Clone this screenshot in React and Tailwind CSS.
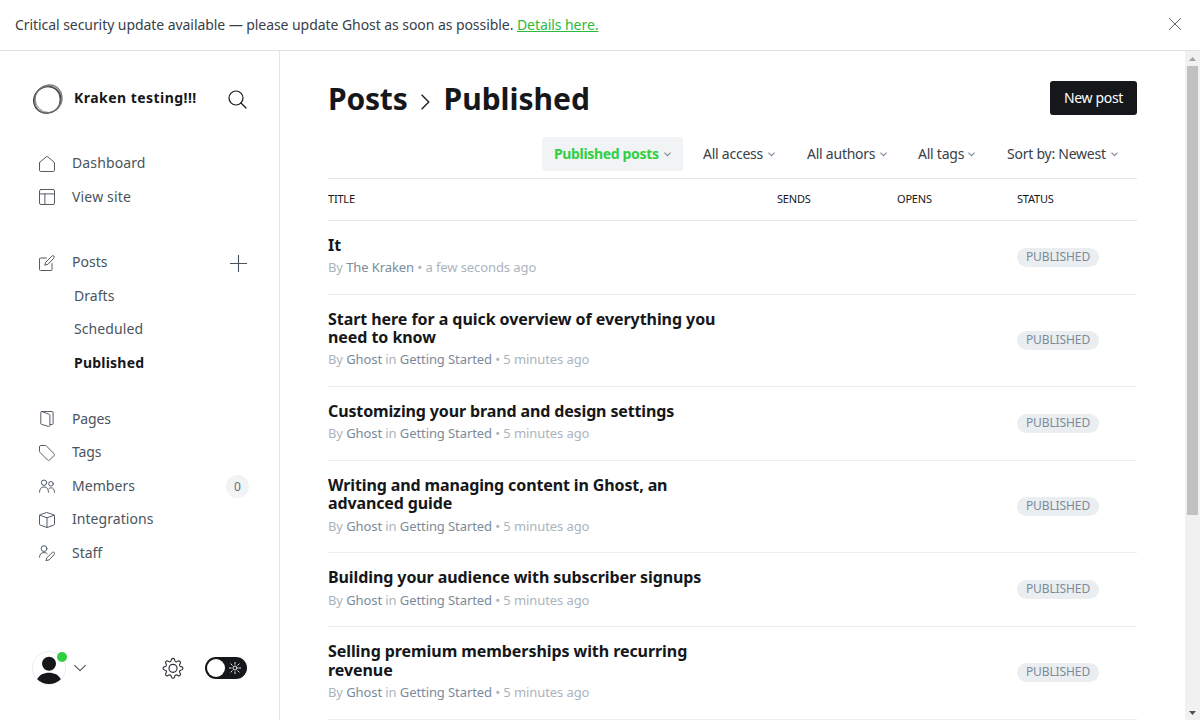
import React from "react";

const Icon = ({ children, className = "", size = 16, view = "0 0 16 16", w = 0.95 }) => (
  <svg width={size} height={size} viewBox={view} fill="none" stroke="currentColor" strokeWidth={w} strokeLinecap="round" strokeLinejoin="round" className={"shrink-0 " + className}>
    {children}
  </svg>
);

const icons = {
  home: <path d="M.5 7v7.2c0 .7.5 1.300 1.200 1.300h12.600c.7 0 1.200-.6 1.200-1.300V7c0-.4-.2-.7-.5-1L8.700.8a1.100 1.100 0 0 0-1.400 0L1 6c-.3.300-.5.600-.5 1z" />,
  site: <g><rect x=".5" y=".5" width="15" height="15" rx="1.500" /><path d="M.5 4.900h15M5.900 4.900v10.600" /></g>,
  posts: <g><path d="M7.500 3H1.500a1 1 0 0 0-1 1v10.500a1 1 0 0 0 1 1H12a1 1 0 0 0 1-1V8.500" /><path d="M8.600 9.400l-2.800.800.800-2.800L12.900 1.100a1.400 1.400 0 0 1 2 2z" /></g>,
  pages: <g><path d="M11.500 13.500h1.600c.6 0 1-.4 1-1V1.500c0-.6-.4-1-1-1H2.600" /><path d="M2.600.5c-.5 0-.8.400-.8.900v11.100c0 .4.300.8.700.9l7.200 2c.6.200 1.200-.3 1.200-.9V4.300c0-.5-.3-.9-.7-1z" /></g>,
  tags: <path d="M.5 2v4.300c0 .4.200.8.500 1.100l7.700 7.700c.5.500 1.300.5 1.800 0l4.600-4.600c.5-.5.5-1.300 0-1.800L7.400 1C7.100.7 6.700.5 6.300.5H2C1.200.5.5 1.200.5 2z" />,
  members: <g><circle cx="5" cy="4.700" r="2.700" /><circle cx="12" cy="5.800" r="2.300" /><path d="M.5 14.200c0-3.200 1.600-5.300 4.500-5.300s4.500 2.100 4.500 5.300M9.800 10.800c.6-.7 1.300-1 2.200-1 2.300 0 3.500 1.700 3.500 4.400" /></g>,
  box: <path d="M8 .6l6.700 2.100c.5.200.8.500.8 1v8.400c0 .5-.3.900-.8 1L8 15.500l-6.700-2.400c-.5-.1-.8-.5-.8-1V3.700c0-.5.300-.8.800-1zM.8 3.200L8 5.800l7.200-2.600M8 5.800v9.500" />,
  staff: <g><circle cx="5" cy="3.600" r="2.900" /><path d="M.5 12.200C.6 9.300 2.200 7.600 5 7.600c1.300 0 2.400.4 3.200 1.100M9.900 14.900l-2.900.8.800-2.900 5.500-5.300a1.350 1.350 0 0 1 2 2z" /></g>,
};

const NavItem = ({ icon, label, track, children }) => (
  <div className="flex h-[33.5px] items-center pl-[39px] pr-[31px]">
    <Icon className="mt-[2px]">{icons[icon]}</Icon>
    <span className={"ml-[17px] grow text-[14px] " + track}>{label}</span>
    {children}
  </div>
);

const SubItem = ({ label, className }) => (
  <div className={"flex h-[33.5px] items-center pl-[74px] text-[14px] " + className}>{label}</div>
);

const Filter = ({ label, width, track = "tracking-[-0.24px]", className = "px-3 text-[#394047]" }) => (
  <div className={"flex h-[34px] items-center gap-[5px] text-[14px] " + className}>
    <span className={"whitespace-nowrap pb-[2px] " + width + " " + track}>{label}</span>
    <svg width="7" height="5" viewBox="0 0 7 5" fill="none" stroke="#7c8b9a" strokeWidth="1.100" className="shrink-0"><path d="M.5.600l3 3 3-3" /></svg>
  </div>
);

const posts = [
  { title: ["It"], track: "tracking-[0.1px]", author: "The Kraken", time: "a few seconds ago", h: "h-[74px]", gap: "mt-[3px] mb-[2px]" },
  { title: ["Start here for a quick overview of everything you", "need to know"], track: "tracking-[-0.06px]", author: "Ghost", tag: "Getting Started", h: "h-[92px]", gap: "mt-[3px] mb-[2px]" },
  { title: ["Customizing your brand and design settings"], track: "tracking-[-0.13px]", author: "Ghost", tag: "Getting Started", h: "h-[74px]", gap: "mt-[3px] mb-[2px]" },
  { title: ["Writing and managing content in Ghost, an", "advanced guide"], track: "tracking-[-0.12px]", author: "Ghost", tag: "Getting Started", h: "h-[92px]", gap: "mt-[4px] mb-[1px]" },
  { title: ["Building your audience with subscriber signups"], track: "tracking-[-0.09px]", author: "Ghost", tag: "Getting Started", h: "h-[74px]", gap: "mt-[4px] mb-[1px]" },
  { title: ["Selling premium memberships with recurring", "revenue"], track: "tracking-[-0.07px]", author: "Ghost", tag: "Getting Started", h: "h-[93px]", gap: "mt-[3px] mb-[2px]", pill: "mb-[1px]" },
];

const Row = ({ post }) => (
  <div className={"flex shrink-0 items-center border-b border-[#ebeef0] " + post.h}>
    <div className="w-[689px] whitespace-nowrap">
      <div className={"text-[16px] font-bold leading-[18.4px] text-[#15171a] " + post.track}>
        {post.title.map((t) => <div key={t}>{t}</div>)}
      </div>
      <div className={"text-[13px] leading-[20px] tracking-[-0.09px] text-[#abb4be] " + post.gap}>
        By <span className="text-[#7c8b9a]">{post.author}</span>
        {post.tag && <> in <span className="text-[#7c8b9a]">{post.tag}</span></>} • {post.time || "5 minutes ago"}
      </div>
    </div>
    <span className={"flex h-[19px] w-[82px] items-center justify-center rounded-full bg-[#ebeef0] pb-[2px] text-[12px] tracking-[-0.1px] text-[#7c8b9a] " + (post.pill || "")}>PUBLISHED</span>
  </div>
);

export default function App() {
  return (
    <div className="flex h-[720px] w-[1200px] flex-col overflow-hidden bg-white font-['Droid_Sans','Noto_Sans',sans-serif] text-[#394047]">
      <div className="flex h-[51px] shrink-0 items-center justify-between border-b border-[#dfe1e3] pl-[15px] pr-[19px] text-[14px]">
        <p className="pb-[2px] tracking-[-0.062px]">Critical security update available — please update Ghost as soon as possible. <span className="text-[#2bba3c] underline">Details here.</span></p>
        <Icon size={12} view="0 0 12 12" w={0.8} className="-mt-[2px]"><path d="M.3.300l11.400 11.400M11.700.300L.3 11.700" /></Icon>
      </div>
      <div className="flex min-h-0 grow">
        <aside className="flex w-[280px] shrink-0 flex-col border-r border-[#e3e6e9] text-[#4a545e]">
          <div className="flex h-[95px] shrink-0 items-center pl-[32px] pr-[32px]">
            <svg width="32" height="32" viewBox="0 0 32 32" fill="none" className="shrink-0">
              <path d="M12 3.500C17 .2 24 1 27.500 6.500c3 4.600 3 11-1 15.800 1.500-5 1.500-9.800-1.500-13.500C21.500 4.500 17 3.200 12 3.500z" fill="#999" fillOpacity=".7" />
              <ellipse cx="15.300" cy="17" rx="13.900" ry="13" stroke="#3a3a3a" strokeWidth="1.200" transform="rotate(-30 15.300 17)" />
              <ellipse cx="16.800" cy="15.700" rx="13.600" ry="13.800" stroke="#8a8a8a" strokeWidth=".9" />
              <ellipse cx="15.200" cy="16.600" rx="13" ry="13.600" stroke="#555" strokeWidth=".9" />
              <ellipse cx="16.300" cy="15.900" rx="14.800" ry="12.800" stroke="#777" strokeWidth=".8" transform="rotate(-50 16.300 15.900)" />
            </svg>
            <span className="ml-[10px] grow pb-[2px] text-[14px] font-bold tracking-[0.46px] text-[#15171a]">Kraken testing!!!</span>
            <Icon size={19} view="0 0 19 19" w={1.200} className="mt-px text-[#15171a]"><circle cx="8" cy="8" r="7" /><path d="M13 13l5 5" /></Icon>
          </div>
          <NavItem icon="home" label="Dashboard" track="tracking-[0.12px]" />
          <NavItem icon="site" label="View site" track="tracking-[0.17px]" />
          <div className="h-[32px] shrink-0" />
          <NavItem icon="posts" label="Posts" track="">
            <Icon size={17} view="0 0 17 17" w={1.100} className="mr-[1px] mt-[3px]"><path d="M8.500.300v16.400M.3 8.500h16.400" /></Icon>
          </NavItem>
          <SubItem label="Drafts" className="tracking-[0.05px]" />
          <SubItem label="Scheduled" className="tracking-[0.1px]" />
          <SubItem label="Published" className="font-bold tracking-[0.22px] text-[#15171a]" />
          <div className="h-[22.5px] shrink-0" />
          <NavItem icon="pages" label="Pages" track="tracking-[-0.15px]" />
          <NavItem icon="tags" label="Tags" track="tracking-[-0.15px]" />
          <NavItem icon="members" label="Members" track="tracking-[0.05px]">
            <span className="-mr-px mt-[3px] flex size-[23px] items-center justify-center rounded-full bg-[#f1f3f4] text-[12px] text-[#626d79]">0</span>
          </NavItem>
          <NavItem icon="box" label="Integrations" track="tracking-[0.05px]" />
          <NavItem icon="staff" label="Staff" track="" />
          <div className="mt-auto flex h-[104px] items-center pl-[32px] pr-[32px]">
            <div className="relative size-[34px]">
              <svg width="34" height="34" viewBox="0 0 34 34">
                <circle cx="17" cy="17" r="16.500" fill="#fff" stroke="#e3e6e9" strokeWidth=".8" />
                <circle cx="17" cy="12.800" r="7" fill="#15171a" />
                <path d="M5.200 28.200c2-4.400 6.500-6.500 11.800-6.500s9.800 2.100 11.800 6.500A16.500 16.500 0 0 1 17 33a16.500 16.500 0 0 1-11.800-4.800z" fill="#15171a" />
              </svg>
              <span className="absolute left-[25px] top-px size-[10px] rounded-full bg-[#30cf43]" />
            </div>
            <Icon size={12} view="0 0 12 12" w={1.100} className="ml-[8px]"><path d="M.6 3.300L6 8.700l5.400-5.400" /></Icon>
            <Icon size={22} view="0 0 24 24" w={1.250} className="ml-auto text-[#2a2f35]">
              <circle cx="12" cy="12.400" r="4.400" />
              <path d="M10.300 2.200a1.800 1.800 0 0 1 3.400 0l.4 1.400a1.800 1.800 0 0 0 2.600 1.100l1.300-.7a1.800 1.800 0 0 1 2.400 2.400l-.7 1.300a1.800 1.800 0 0 0 1.100 2.600l1.400.4a1.800 1.800 0 0 1 0 3.400l-1.400.4a1.800 1.800 0 0 0-1.100 2.600l.7 1.300a1.800 1.800 0 0 1-2.400 2.400l-1.300-.7a1.800 1.800 0 0 0-2.600 1.100l-.4 1.400a1.800 1.800 0 0 1-3.400 0l-.4-1.400a1.800 1.800 0 0 0-2.600-1.100l-1.300.7A1.800 1.800 0 0 1 3.600 18.400l.7-1.300a1.800 1.800 0 0 0-1.100-2.600l-1.400-.4a1.800 1.800 0 0 1 0-3.400l1.400-.4a1.800 1.800 0 0 0 1.100-2.600L3.600 6.400A1.800 1.800 0 0 1 6 4l1.300.7a1.800 1.800 0 0 0 2.600-1.100z" transform="translate(.6 .6) scale(.95)" />
            </Icon>
            <div className="ml-[21px] flex h-[22px] w-[42px] items-center justify-between rounded-full bg-[#15171a] pl-[2px] pr-[6px]">
              <span className="size-[18px] rounded-full bg-white" />
              <Icon size={12} view="0 0 12 12" w={0.9} className="text-white"><circle cx="6" cy="6" r="2" /><path d="M6 .2v2M6 9.800v2M.2 6h2M9.800 6h2M1.900 1.900l1.300 1.300M8.800 8.800l1.300 1.300M1.900 10.100l1.300-1.300M8.800 3.200l1.300-1.300" /></Icon>
            </div>
          </div>
        </aside>
        <main className="flex min-w-0 grow flex-col pl-[48px] pr-[48px]">
          <div className="flex h-[86px] shrink-0 items-center justify-between pt-[8px]">
            <h1 className="flex items-center pt-[2px] text-[30px] font-bold leading-[36px] text-[#15171a]">
              <span className="tracking-[-0.2px]">Posts</span>
              <svg width="9" height="16" viewBox="0 0 9 16" fill="none" stroke="#15171a" strokeWidth="1.300" className="ml-[13px] mr-[14px] mt-[6px]"><path d="M.6.800L7.800 8 .6 15.200" /></svg>
              <span>Published</span>
            </h1>
            <button className="h-[34px] w-[87px] rounded-[3px] bg-[#15171a] pb-[2px] text-[14px] tracking-[-0.36px] text-white">New post</button>
          </div>
          <div className="flex h-[42px] shrink-0 items-start justify-end gap-[8px] border-b border-[#e3e6e9] pr-[7px]">
            <Filter label="Published posts" width="w-[105px]" track="tracking-[-0.34px]" className="rounded-[3px] bg-[#f1f3f4] px-3 font-bold text-[#30cf43]" />
            <Filter label="All access" width="w-[60px]" />
            <Filter label="All authors" width="w-[68px]" className="pl-3 pr-[11px] text-[#394047]" />
            <Filter label="All tags" width="w-[45px]" />
            <Filter label="Sort by: Newest" width="w-[99px]" />
          </div>
          <div className="flex h-[42px] shrink-0 items-center border-b border-[#e3e6e9] text-[11px] tracking-[-0.2px] text-[#15171a]">
            <span className="w-[449px]">TITLE</span><span className="w-[120px]">SENDS</span><span className="w-[120px]">OPENS</span><span>STATUS</span>
          </div>
          {posts.map((p) => <Row key={p.title[0]} post={p} />)}
        </main>
        <div className="flex w-[15px] shrink-0 flex-col items-center justify-between bg-[#f1f1f1]">
          <div className="flex flex-col items-center">
            <svg width="15" height="15" viewBox="0 0 15 15"><path d="M4 10l3.500-4 3.500 4z" fill="#a3a3a3" /></svg>
            <div className="h-[449px] w-[11px] bg-[#c1c1c1]" />
          </div>
          <svg width="15" height="15" viewBox="0 0 15 15"><path d="M4 6l3.500 4L11 6z" fill="#505050" /></svg>
        </div>
      </div>
    </div>
  );
}
